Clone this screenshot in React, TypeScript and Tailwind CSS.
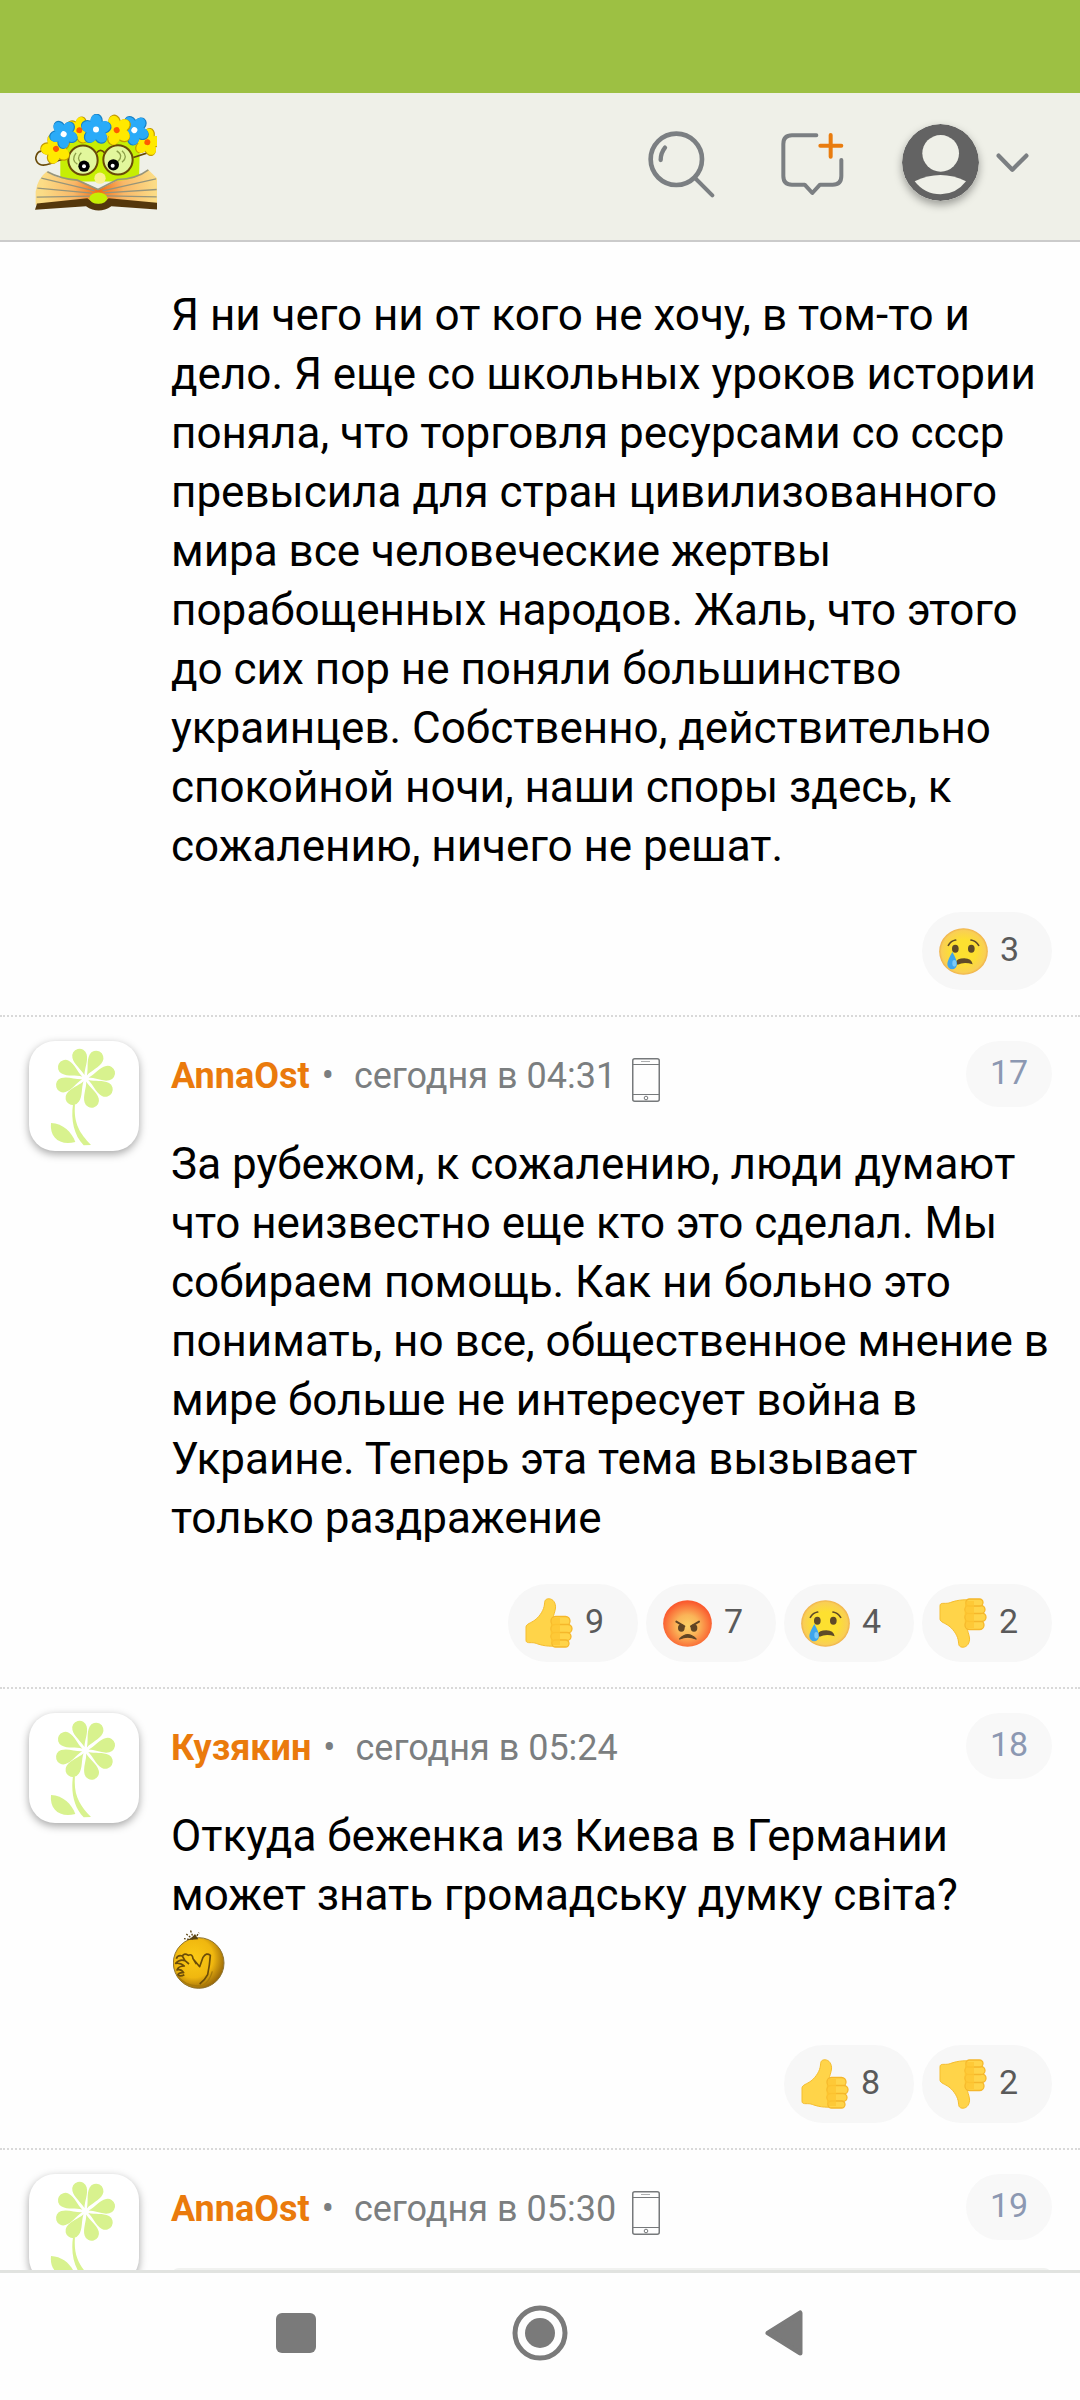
import React from "react";

type ReactionKind = "up" | "angry" | "cry" | "down";

interface IComment {
    id: number
    author?: string
    date?: string
    mobile?: boolean
    text?: string
    smile?: boolean
    quote?: boolean
    reactions: { kind: ReactionKind, count: number }[]
}

const comments: IComment[] = [
    {
        id: 16,
        text: "Я ни чего ни от кого не хочу, в том-то и дело. Я еще со школьных уроков истории поняла, что торговля ресурсами со ссср превысила для стран цивилизованного мира все человеческие жертвы порабощенных народов. Жаль, что этого до сих пор не поняли большинство украинцев. Собственно, действительно спокойной ночи, наши споры здесь, к сожалению, ничего не решат.",
        reactions: [{ kind: "cry", count: 3 }],
    },
    {
        id: 17,
        author: "AnnaOst",
        date: "сегодня в 04:31",
        mobile: true,
        text: "За рубежом, к сожалению, люди думают что неизвестно еще кто это сделал. Мы собираем помощь. Как ни больно это понимать, но все, общественное мнение в мире больше не интересует война в Украине. Теперь эта тема вызывает только раздражение",
        reactions: [
            { kind: "up", count: 9 },
            { kind: "angry", count: 7 },
            { kind: "cry", count: 4 },
            { kind: "down", count: 2 },
        ],
    },
    {
        id: 18,
        author: "Кузякин",
        date: "сегодня в 05:24",
        text: "Откуда беженка из Киева в Германии может знать громадську думку світа?",
        smile: true,
        reactions: [
            { kind: "up", count: 8 },
            { kind: "down", count: 2 },
        ],
    },
    {
        id: 19,
        author: "AnnaOst",
        date: "сегодня в 05:30",
        mobile: true,
        quote: true,
        reactions: [],
    },
];

const HatFlower: React.FC<{ x: number, y: number, r: number, turn: number, color: string, edge: string, core: string }> = ({ x, y, r, turn, color, edge, core }) => (
    <g transform={`translate(${x} ${y}) rotate(${turn})`}>
        {[0, 72, 144, 216, 288].map((a) => (
            <ellipse key={"e" + a} cx="2" cy={-r * 0.58} rx={r * 0.42} ry={r * 0.5} transform={`rotate(${a})`} fill={edge}/>
        ))}
        {[0, 72, 144, 216, 288].map((a) => (
            <ellipse key={a} cx="0" cy={-r * 0.56} rx={r * 0.39} ry={r * 0.46} transform={`rotate(${a})`} fill={color}/>
        ))}
        <circle r={r * 0.4} fill={color}/>
        <circle r="9" fill={core}/>
    </g>
)

const Logo = () => (
    <svg viewBox="105 98 366 290" className="w-[122px] h-[97px]">
        <defs>
            <radialGradient id="page" gradientUnits="userSpaceOnUse" cx="296" cy="325" r="170">
                <stop offset="0" stopColor="#f26a12"/>
                <stop offset="0.45" stopColor="#f9b868"/>
                <stop offset="1" stopColor="#fbdc86"/>
            </radialGradient>
        </defs>
        <path d="M181 300V200Q190 172 230 172H370Q412 176 419 210L417 300Z" fill="#c6ee04"/>
        <path d="M140 270Q180 298 240 298L296 324L350 298Q410 296 444 264L471 290V366L330 356Q296 372 262 358L107 370V330Q112 292 140 270Z" fill="url(#page)"/>
        <path d="M142 271Q180 292 232 296L294 324L352 294Q410 292 445 265" fill="none" stroke="#97957a" strokeWidth="5"/>
        <path d="M124 290L284 328M112 320L276 335M110 347L272 344M468 292L308 328M470 324L314 334M470 346L318 343" fill="none" stroke="#97957a" strokeWidth="4"/>
        <path d="M111 366L262 350Q296 380 326 350L471 364V384L334 374Q296 400 258 374L105 385Z" fill="#54370c"/>
        <ellipse cx="295" cy="350" rx="27" ry="17" fill="#c6ee04"/>
        <circle cx="300" cy="290" r="17" fill="#fbf08e"/>
        <circle cx="249" cy="236" r="44" fill="#e2f79c" stroke="#694a08" strokeWidth="6"/>
        <circle cx="354" cy="235" r="44" fill="#e2f79c" stroke="#694a08" strokeWidth="6"/>
        <path d="M290 214Q301 199 314 214M205 228Q170 238 150 247Q112 260 107 230Q110 210 124 209M400 228L440 215" fill="none" stroke="#694a08" strokeWidth="5"/>
        <path d="M228 214Q212 236 232 248M244 214Q226 232 246 246M350 208Q372 222 354 240M366 208Q386 226 366 242" fill="none" stroke="#8da04a" strokeWidth="4"/>
        <circle cx="252" cy="254" r="17" fill="#000"/>
        <circle cx="252" cy="254" r="6" fill="#fff"/>
        <circle cx="340" cy="250" r="17" fill="#000"/>
        <circle cx="338" cy="253" r="6" fill="#fff"/>
        <HatFlower x={168} y={202} r={44} turn={-20} color="#ffe900" edge="#c39a00" core="#ff5a00"/>
        <HatFlower x={238} y={146} r={39} turn={10} color="#ffe900" edge="#c39a00" core="#ff5a00"/>
        <HatFlower x={442} y={182} r={40} turn={10} color="#ffe900" edge="#c39a00" core="#ff5a00"/>
        <HatFlower x={191} y={158} r={41} turn={36} color="#2aabf8" edge="#177fc4" core="#fff"/>
        <HatFlower x={403} y={146} r={43} turn={40} color="#2aabf8" edge="#177fc4" core="#fff"/>
        <HatFlower x={350} y={146} r={44} turn={-18} color="#ffe900" edge="#c39a00" core="#ff5a00"/>
        <HatFlower x={288} y={144} r={44} turn={0} color="#2aabf8" edge="#177fc4" core="#fff"/>
    </svg>
)

const SearchIcon = () => (
    <svg viewBox="80 92 201 201" className="w-[67px] h-[67px]" fill="none" stroke="#7b7f82" strokeLinecap="round">
        <circle cx="165" cy="177" r="77" strokeWidth="14"/>
        <path d="M131 142Q118 158 118 179" strokeWidth="13"/>
        <path d="M221 233L273 285" strokeWidth="12"/>
    </svg>
)

const MessageIcon = () => (
    <svg viewBox="482 98 189 189" className="w-[63px] h-[63px]" fill="none" strokeLinecap="round" strokeLinejoin="round">
        <path d="M588 105H515Q489 105 489 131V227Q489 253 515 253H553L576 278L599 253H637Q663 253 663 227V179" stroke="#7b7f82" strokeWidth="12"/>
        <path d="M631 104V169M600 136H663" stroke="#e97c0e" strokeWidth="12"/>
    </svg>
)

const UserIcon = () => (
    <svg viewBox="0 0 231 231" className="w-[77px] h-[77px] rounded-full shadow-[0_4px_8px_rgba(0,0,0,0.35)]">
        <circle cx="115.5" cy="115.5" r="115.5" fill="#636363"/>
        <circle cx="116" cy="88" r="55" fill="#eff0e8"/>
        <path d="M38 172Q116 134 192 172Q162 211 116 211Q68 211 38 172Z" fill="#eff0e8"/>
    </svg>
)

const ChevronIcon = () => (
    <svg viewBox="0 0 99 60" className="w-[33px] h-[20px]" fill="none" stroke="#7b7f82" strokeWidth="13" strokeLinecap="round" strokeLinejoin="round">
        <path d="M8 8L49 50L91 8"/>
    </svg>
)

const PhoneIcon = () => (
    <svg viewBox="0 0 28 44" className="w-[28px] h-[44px]" fill="none" stroke="#76797b">
        <rect x="0.75" y="0.75" width="26.5" height="42.5" rx="2" strokeWidth="1.5"/>
        <path d="M1 6.5H27M1 36.5H27" strokeWidth="1"/>
        <path d="M9 3.5H18" strokeWidth="1" opacity="0.6"/>
        <circle cx="14" cy="40" r="1.8" strokeWidth="1"/>
    </svg>
)

const FlowerAvatar = () => (
    <svg viewBox="87 122 330 330" className="w-[110px] h-[110px]" fill="#d8f28e">
        {[-14.6, 28, 77, 119, 164, 213, 253, 299].map((a) => (
            <path
                key={a}
                transform={`translate(256 234) rotate(${a})`}
                d="M0-10C-5-30-22-48-22-69A22 22 0 0 1 22-69C22-48 5-30 0-10Z"
            />
        ))}
        <path d="M219 312C212 360 222 405 251 435L273 434C240 400 220 370 225 312Z"/>
        <path d="M153 368C190 370 215 395 226 425C180 437 148 412 153 368Z"/>
    </svg>
)

// old style forum smile, face covered with a hand
const SmileImage = () => (
    <svg viewBox="0 0 156 186" className="w-[52px] h-[62px]">
        <defs>
            <radialGradient id="smile" cx="0.4" cy="0.4" r="0.65">
                <stop offset="0" stopColor="#fbcb16"/>
                <stop offset="0.6" stopColor="#f0b70f"/>
                <stop offset="1" stopColor="#936208"/>
            </radialGradient>
        </defs>
        <circle cx="77" cy="105" r="76" fill="url(#smile)" stroke="#8f7430" strokeWidth="3"/>
        <path d="M44 36L76 34L66 18L57 28Z" fill="#5b4311"/>
        <path d="M60 34L40 18M62 32L52 6M66 32L78 14M48 34L33 32" stroke="#5b4311" strokeWidth="4" strokeDasharray="6 4"/>
        <path d="M10 92Q14 80 28 84Q34 74 46 82Q58 76 60 92L80 116L90 88Q100 72 112 82Q110 112 104 140Q96 156 80 168M60 92L70 108M28 84L36 98Q20 92 8 106Q24 104 34 114Q16 114 12 126Q24 122 32 134Q18 132 14 142Q24 146 34 140M36 98L48 108" fill="none" stroke="#6b4c08" strokeWidth="5" strokeLinejoin="round"/>
        <path d="M12 142Q40 180 90 172Q110 160 118 130" fill="none" stroke="#a87a0a" strokeWidth="4"/>
    </svg>
)

const ThumbIcon: React.FC<{ down?: boolean }> = ({ down }) => (
    <svg viewBox="0 0 48 50" className={down ? "w-12 h-[50px] -scale-y-100" : "w-12 h-[50px]"}>
        <path d="M1 29C1 26 6 25 10 22C15 18 19 12 19.500 6C19.500 2 21 .8 24 .8C28 .8 31 5 30.500 10C30 14 28.500 17 28 20L31 48C20 49 13 46 10 45C5 44 1 46 1 42Z" fill="#ffd449" stroke="#f5bd2f" strokeWidth="1"/>
        <path d="M26 21H36V48H27Q25 40 26 21Z" fill="#fcc62f"/>
        <g fill="#ffd449" stroke="#f5b72b" strokeWidth="1.300">
            <rect x="26" y="18.500" width="19" height="9" rx="4.500"/>
            <rect x="26" y="26.500" width="21" height="8.500" rx="4.200"/>
            <rect x="26" y="34.500" width="20" height="8" rx="4"/>
            <rect x="27" y="42" width="17" height="7" rx="3.500"/>
        </g>
        <path d="M27 20H35V47H28Q26 44 26 36Z" fill="#fec531" opacity="0.75"/>
    </svg>
)

const CryIcon = () => (
    <svg viewBox="0 0 147 141" className="w-[49px] h-[47px]">
        <defs>
            <radialGradient id="cry" cx="0.5" cy="0.5" r="0.5">
                <stop offset="0.5" stopColor="#fde030"/>
                <stop offset="0.9" stopColor="#f9cf55"/>
                <stop offset="1" stopColor="#efb04b"/>
            </radialGradient>
        </defs>
        <ellipse cx="73.500" cy="70.500" rx="73" ry="70" fill="url(#cry)"/>
        <ellipse cx="49" cy="62" rx="10" ry="12" fill="#5f4a28"/>
        <ellipse cx="97" cy="62" rx="10" ry="12" fill="#5f4a28"/>
        <path d="M28 52Q36 38 50 36M96 36Q110 38 119 52" fill="none" stroke="#5f4a28" strokeWidth="5" strokeLinecap="round"/>
        <path d="M51 103Q53 91 76 91Q98 91 101 109Q76 100 56 110Q51 109 51 103Z" fill="#5f4a28"/>
        <path d="M40 72Q54 96 54 108A14 15 0 0 1 25 108Q25 98 40 72Z" fill="#3ea5ec"/>
        <ellipse cx="46" cy="106" rx="6" ry="10" fill="#7cc9f5"/>
    </svg>
)

const AngryIcon = () => (
    <svg viewBox="0 0 147 141" className="w-[49px] h-[47px]">
        <defs>
            <radialGradient id="angry" cx="0.5" cy="0.55" r="0.52">
                <stop offset="0" stopColor="#fbd065"/>
                <stop offset="0.45" stopColor="#fab458"/>
                <stop offset="1" stopColor="#fa5a2e"/>
            </radialGradient>
        </defs>
        <ellipse cx="73.500" cy="70.500" rx="73" ry="70" fill="url(#angry)"/>
        <ellipse cx="55" cy="84" rx="10" ry="11" fill="#614524"/>
        <ellipse cx="93" cy="84" rx="10" ry="11" fill="#614524"/>
        <path d="M40 65L64 79M108 65L84 79" stroke="#614524" strokeWidth="6" strokeLinecap="round"/>
        <path d="M50 117Q74 91 99 117Q74 106 50 117Z" fill="#614524" stroke="#614524" strokeWidth="4" strokeLinejoin="round"/>
    </svg>
)

const reactionIcons: Record<ReactionKind, React.ReactNode> = {
    up: <ThumbIcon/>,
    down: <ThumbIcon down/>,
    cry: <CryIcon/>,
    angry: <AngryIcon/>,
};

const Comment: React.FC<{ comment: IComment }> = ({ comment }) => {
    const { id, author, date, mobile, text, smile, quote, reactions } = comment;

    return (
        <article className={author ? "flex px-7 pt-6 pb-[25px] border-t-2 border-dotted border-[#d9d9d9]" : "flex px-7 pt-[44px] pb-[25px]"}>
            <div className="w-[143px] shrink-0">
                {author && (
                    <a href="#" aria-label={author} className="block ml-px w-[110px] h-[110px] rounded-[26px] overflow-hidden bg-white shadow-[0_3px_8px_rgba(0,0,0,0.35)]">
                        <FlowerAvatar/>
                    </a>
                )}
            </div>
            <div className="flex-1 min-w-0">
                {author && (
                    <div className="flex justify-between items-start mb-7">
                        <div className="flex items-center h-[66px] pt-1 text-[36px] leading-[42px] text-[#7b7e80]">
                            <a href="#" className="font-bold text-[#ea7a0c]">{author}</a>
                            <span className="ml-3 mr-5">•</span>
                            <time className="mr-4">{date}</time>
                            {mobile && <span className="pt-2"><PhoneIcon/></span>}
                        </div>
                        <a href={"#" + id} className="w-[86px] h-[66px] pb-1 rounded-full bg-[#f8f8f8] flex items-center justify-center text-[34px] leading-10 text-[#8c98b2]">{id}</a>
                    </div>
                )}
                {quote && <blockquote className="h-40 rounded-lg bg-[#f1f2f0]"/>}
                {text && <p className="text-[44px] leading-[59px] text-black">{text}</p>}
                {smile && <div className="pt-[3px] pb-[19px] pl-0.5"><SmileImage/></div>}
                {reactions.length > 0 && (
                    <div className="mt-9 flex justify-end gap-2">
                        {reactions.map(({ kind, count }) => (
                            <button key={kind} aria-label={kind} className="w-[130px] h-[78px] pl-[17px] rounded-full bg-[#f7f7f7] flex items-center gap-3">
                                {reactionIcons[kind]}
                                <span className="pb-1 text-[34px] leading-10 text-[#5a5a5a]">{count}</span>
                            </button>
                        ))}
                    </div>
                )}
            </div>
        </article>
    )
}

const App = () => {
    return (
        <div className="h-screen flex flex-col bg-[#fefefe] font-[Roboto,'Noto_Sans',sans-serif]">
            <div className="h-[93px] shrink-0 bg-[#9dc043]"/>
            <header className="h-[149px] shrink-0 pl-[35px] pr-[51px] pb-2 flex items-center justify-between bg-[#eff0e8] border-b-2 border-[#cbcbcb]">
                <a href="#" aria-label="Главная"><Logo/></a>
                <div className="flex items-center">
                    <button aria-label="Поиск" className="mr-[66px] pt-1"><SearchIcon/></button>
                    <button aria-label="Новое сообщение" className="mr-[58px] pt-1"><MessageIcon/></button>
                    <button aria-label="Профиль" className="flex items-center gap-[17px]">
                        <UserIcon/>
                        <ChevronIcon/>
                    </button>
                </div>
            </header>
            <main className="flex-1 min-h-0 overflow-hidden">
                {comments.map((comment) => <Comment key={comment.id} comment={comment}/>)}
            </main>
            <nav className="h-[130px] shrink-0 pb-2 flex items-center justify-center border-t-[3px] border-[#e1e3e0]">
                <button aria-label="Недавние" className="w-[244px] flex justify-center">
                    <span className="w-10 h-10 rounded-md bg-[#7a7a7a]"/>
                </button>
                <button aria-label="Домой" className="w-[244px] flex justify-center">
                    <svg viewBox="0 0 56 56" className="w-14 h-14">
                        <circle cx="28" cy="28" r="25" fill="none" stroke="#7a7a7a" strokeWidth="5"/>
                        <circle cx="28" cy="28" r="15" fill="#7a7a7a"/>
                    </svg>
                </button>
                <button aria-label="Назад" className="w-[244px] flex justify-center">
                    <svg viewBox="0 0 38 46" className="w-[38px] h-[46px]">
                        <path d="M3 23L35 3V43Z" fill="#7a7a7a" stroke="#7a7a7a" strokeWidth="5" strokeLinejoin="round"/>
                    </svg>
                </button>
            </nav>
        </div>
    )
}

export default App
